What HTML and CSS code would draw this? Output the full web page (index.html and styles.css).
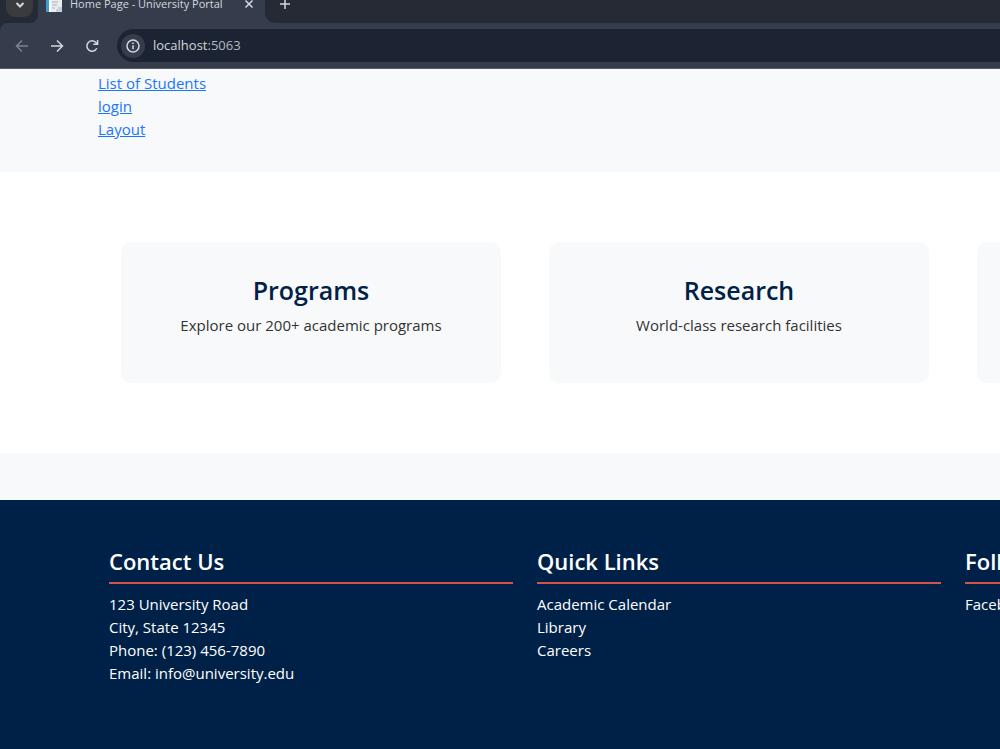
FILE: index.html
```html
<!DOCTYPE html>
<html lang="en">
<head>
	<meta charset="utf-8">
	<title>Home Page - University Portal</title>
	<link rel="stylesheet" href="styles.css">
</head>
<body>
	<header class="browser">
		<div class="tab-strip">
			<div class="tab-search-area">
				<button class="tab-search" type="button" aria-label="Search tabs">
					<svg width="10" height="10" viewBox="0 0 10 10"><path d="M1.5 3l3.5 3.5L8.5 3" /></svg>
				</button>
			</div>
			<div class="tab">
				<svg class="favicon" width="16" height="16" viewBox="0 0 16 16">
					<rect width="16" height="16" fill="#e9edf0" />
					<rect width="3" height="16" fill="#3f9bd6" />
					<rect x="3" width="2" height="16" fill="#fff" />
					<path d="M6 6h6M6 9h5M6 12h3" stroke="#a9b3bb" fill="none" />
					<path d="M10 16v-3h2v-2h4v5z" fill="#c9d1d6" />
				</svg>
				<span class="tab-title">Home Page - University Portal</span>
				<button class="tab-close" type="button" aria-label="Close tab">
					<svg width="10" height="10" viewBox="0 0 10 10"><path d="M1.5 1.5l7 7M8.5 1.5l-7 7" /></svg>
				</button>
			</div>
			<div class="new-tab-area">
				<button class="new-tab" type="button" aria-label="New tab">
					<svg width="12" height="12" viewBox="0 0 12 12"><path d="M6 1v10M1 6h10" /></svg>
				</button>
			</div>
		</div>
		<div class="toolbar">
			<button class="nav-button disabled" type="button" aria-label="Back" disabled>
				<svg width="14" height="14" viewBox="0 0 14 14"><path d="M13 7H2M7 1.5L1.5 7L7 12.5" /></svg>
			</button>
			<button class="nav-button" type="button" aria-label="Forward">
				<svg width="14" height="14" viewBox="0 0 14 14"><path d="M1 7h11M7 1.5L12.5 7L7 12.5" /></svg>
			</button>
			<button class="nav-button" type="button" aria-label="Reload">
				<svg width="14" height="14" viewBox="0 0 14 14"><path d="M11.8 9.2A5.2 5.2 0 1 1 11.2 3.8L12.4 5M12.6 1v4.3H8.3" /></svg>
			</button>
			<div class="address-bar">
				<button class="site-info" type="button" aria-label="Site information">
					<svg width="14" height="14" viewBox="0 0 14 14"><circle cx="7" cy="7" r="6" /><path d="M7 6.2v4M7 3.5v1.4" /></svg>
				</button>
				<span class="address">localhost<span class="port">:5063</span></span>
			</div>
		</div>
	</header>

	<nav class="links">
		<a href="#">List of Students</a>
		<a href="#">login</a>
		<a href="#">Layout</a>
	</nav>

	<main class="features">
		<section class="card">
			<h2>Programs</h2>
			<p>Explore our 200+ academic programs</p>
		</section>
		<section class="card">
			<h2>Research</h2>
			<p>World-class research facilities</p>
		</section>
		<section class="card"></section>
	</main>

	<footer class="footer">
		<section class="footer-column">
			<h3>Contact Us</h3>
			<p>123 University Road</p>
			<p>City, State 12345</p>
			<p>Phone: (123) 456-7890</p>
			<p>Email: info@university.edu</p>
		</section>
		<section class="footer-column">
			<h3>Quick Links</h3>
			<a href="#">Academic Calendar</a>
			<a href="#">Library</a>
			<a href="#">Careers</a>
		</section>
		<section class="footer-column">
			<h3>Follow Us</h3>
			<a href="#">Facebook</a>
		</section>
	</footer>
</body>
</html>
```
FILE: styles.css
```css
* {
	box-sizing: border-box;
}
body {
	display: flex;
	flex-direction: column;
	min-height: 100vh;
	margin: 0;
	overflow-x: hidden;
	font-family: "Segoe UI", "Open Sans", sans-serif;
	font-size: 15px;
	line-height: 23px;
	color: #333;
	background-color: #f8f9fb;
}
h2, h3, p {
	margin: 0;
}
button {
	display: flex;
	justify-content: center;
	align-items: center;
	padding: 0;
	border: 0;
	color: inherit;
	background: none;
}
button svg {
	fill: none;
	stroke: currentColor;
	stroke-width: 1.5;
}

/* browser bar */
.browser {
	color: #d3d7de;
	background-color: #252a34;
	border-bottom: 1px solid #596069;
}
.tab-strip {
	display: flex;
	height: 23px;
	background-color: #353d4d;
}
.tab-search-area {
	width: 38px;
	padding-left: 6px;
	background-color: #252a34;
	border-bottom-right-radius: 8px;
}
.tab-search {
	width: 27px;
	height: 17px;
	padding-bottom: 8px;
	background-color: #3a3b3f;
	border-radius: 0 0 9px 9px;
}
.tab-search svg {
	stroke-width: 2;
}
.tab {
	display: flex;
	width: 227px;
	height: 12px;
	padding: 0 8px;
	align-items: flex-end;
}
.tab-title {
	flex: 1;
	margin-left: 8px;
	font-size: 11px;
	line-height: 16px;
	white-space: nowrap;
}
.tab-close {
	width: 16px;
	height: 16px;
}
.new-tab-area {
	flex: 1;
	padding-left: 10px;
	background-color: #252a34;
	border-bottom-left-radius: 10px;
}
.new-tab {
	width: 20px;
	height: 8px;
}
.toolbar {
	display: flex;
	align-items: center;
	height: 45px;
	padding-left: 12px;
	background-color: #353d4d;
	border-top-left-radius: 8px;
}
.nav-button {
	width: 20px;
	height: 20px;
	margin-right: 15px;
}
.disabled {
	color: #7c838f;
}
.address-bar {
	display: flex;
	flex: 1;
	align-items: center;
	height: 33px;
	padding-left: 4px;
	background-color: #1c2433;
	border-radius: 17px 0 0 17px;
}
.site-info {
	width: 24px;
	height: 24px;
	background-color: #353d4d;
	border-radius: 50%;
}
.address {
	margin-left: 8px;
	font-size: 13px;
}
.port {
	color: #b3b8c1;
}

/* page */
.links {
	display: flex;
	flex-direction: column;
	align-items: flex-start;
	padding: 3px 98px 31px;
}
.links a {
	color: #1a75ff;
}
.features {
	display: grid;
	grid-template-columns: repeat(3, minmax(380px, 1fr));
	gap: 48px;
	padding: 70px 121px;
	background-color: #fff;
}
.card {
	min-height: 141px;
	padding: 31px 24px;
	text-align: center;
	background-color: #f8f9fb;
	border-radius: 10px;
}
.card h2 {
	margin-bottom: 6px;
	font-size: 25px;
	font-weight: 600;
	line-height: 35px;
	color: #002147;
}
.footer {
	display: grid;
	flex: 1;
	grid-template-columns: repeat(3, minmax(404px, 1fr));
	gap: 24px;
	margin-top: 47px;
	padding: 47px 109px;
	color: #fff;
	background-color: #002147;
}
.footer-column h3 {
	margin-bottom: 9px;
	padding-bottom: 6px;
	font-size: 22px;
	font-weight: 600;
	line-height: 29px;
	border-bottom: 2px solid #d3544a;
}
.footer-column a {
	display: block;
	color: #fff;
	text-decoration: none;
}
```
